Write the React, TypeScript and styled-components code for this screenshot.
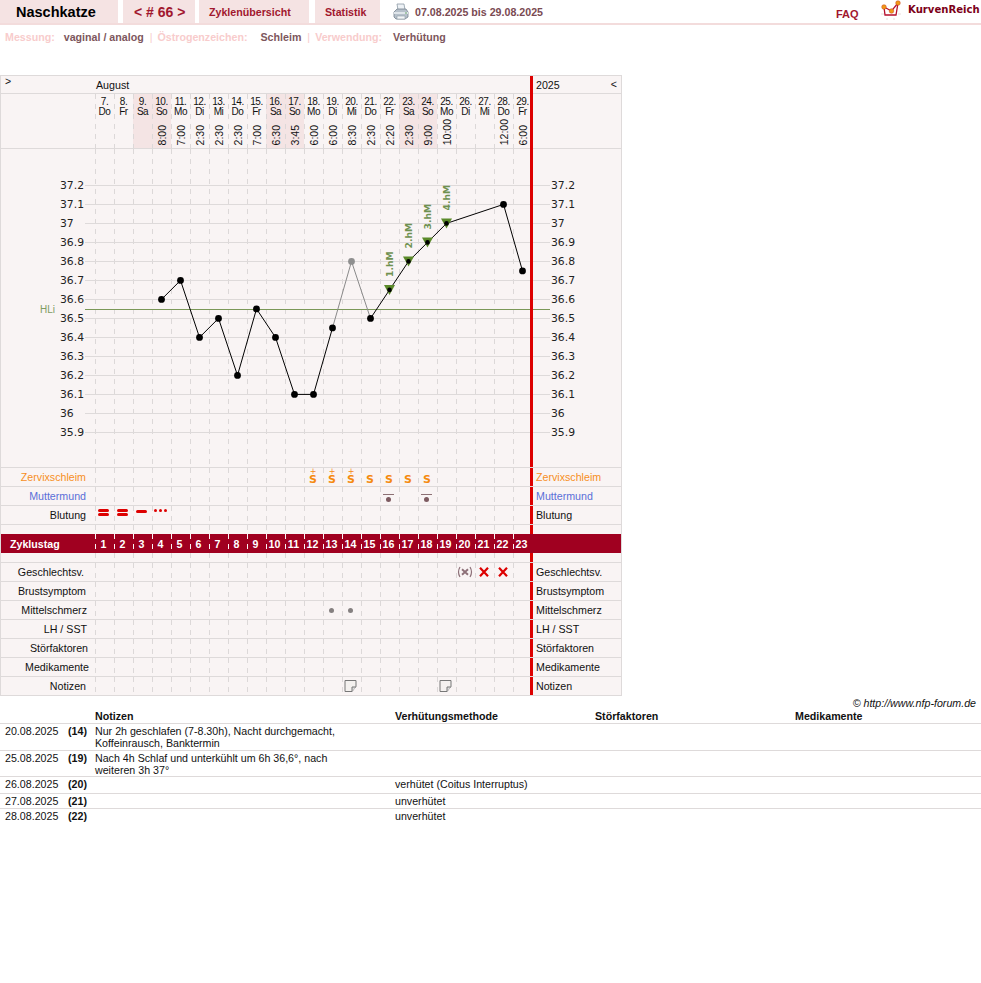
import React from 'react';
import styled, { createGlobalStyle } from 'styled-components';

const GlobalStyle = createGlobalStyle`
  body {
    margin: 0;
    background: #fff;
    font-family: "Liberation Sans", Arial, sans-serif;
    font-size: 10.67px;
    color: #111;
  }
`;

const LINE = '#dedada';
const PANEL = '#f9f4f4';
const PINK = '#f5e3e3';
const WINE = '#a1172e';
const RED = '#dd0000';
const DASH_W = 'rgba(255,255,255,0.95)';

const DAYS = [7, 8, 9, 10, 11, 12, 13, 14, 15, 16, 17, 18, 19, 20, 21, 22, 23, 24, 25, 26, 27, 28, 29];
const WEEK = ['Do', 'Fr', 'Sa', 'So', 'Mo', 'Di', 'Mi'];
const TIMES = ['', '', '', '8:00', '7:00', '2:30', '2:30', '2:30', '7:00', '6:30', '3:45', '6:00', '6:00', '8:30', '2:30', '2:20', '2:30', '9:00', '10:00', '', '', '12:00', '6:00'];

const TopBar = styled.div`
  display: flex;
  height: 23px;
  border-bottom: 2px solid #f3dcdc;
`;

const Tab = styled.div<{ $w: number; $gap: number }>`
  width: ${(p) => p.$w}px;
  margin-left: ${(p) => p.$gap}px;
  box-sizing: border-box;
  padding-left: 10px;
  background: ${PINK};
  display: flex;
  align-items: center;
  font-weight: bold;
  color: ${WINE};
`;

const BrandTab = styled(Tab)`
  font-size: 14.5px;
  color: #000;
  padding-left: 16px;
`;

const CycleTab = styled(Tab)`
  font-size: 14px;
  padding-left: 11px;
`;

const PrinterIcon = styled.svg`
  margin: 3px 0 0 13px;
  width: 16px;
  height: 18px;
`;

const RangeText = styled.div`
  margin-left: 6px;
  align-self: center;
  font-weight: bold;
  color: #7a4a52;
`;

const TopRight = styled.div`
  margin-left: auto;
  display: flex;
`;

const Faq = styled.div`
  margin-top: 8px;
  width: 45px;
  font-weight: bold;
  font-size: 11px;
  color: ${WINE};
`;

const LogoIcon = styled.svg`
  width: 20px;
  height: 20px;
  margin-right: 7px;
`;

const LogoText = styled.div`
  margin-top: 4px;
  width: 73px;
  font-family: "DejaVu Sans", sans-serif;
  font-weight: bold;
  font-size: 10.1px;
  color: #7c0018;
`;

const SubBar = styled.div`
  height: 24px;
  padding-left: 5px;
  display: flex;
  align-items: center;
  font-weight: bold;
  margin-bottom: 26px;
`;

const SubLabel = styled.span<{ $gap?: number }>`
  color: #f8cccc;
  margin-left: ${(p) => p.$gap || 0}px;
`;

const SubValue = styled.span<{ $gap: number }>`
  color: #7d565c;
  margin-left: ${(p) => p.$gap}px;
`;

const SubSep = styled.span`
  color: #f8cccc;
  font-weight: normal;
  margin-left: 6px;
`;

const Frame = styled.div`
  width: 622px;
  box-sizing: border-box;
  border: 1px solid ${LINE};
  border-bottom: 0;
  background: ${PANEL};
`;

const Row = styled.div<{ $h?: number; $plain?: boolean }>`
  display: flex;
  box-sizing: border-box;
  height: ${(p) => p.$h || 19}px;
  border-bottom: ${(p) => (p.$plain ? '0' : `1px solid ${LINE}`)};
`;

const Strip = styled(Row)`
  background: #a00020;
  color: #fff;
  font-weight: bold;
  align-items: stretch;
`;

const Label = styled.div<{ $pad?: number; $color?: string }>`
  width: 94px;
  flex: none;
  box-sizing: border-box;
  display: flex;
  align-items: center;
  justify-content: flex-end;
  padding-right: ${(p) => p.$pad ?? 9}px;
  color: ${(p) => p.$color || '#111'};
`;

const StripLabel = styled(Label)`
  justify-content: flex-start;
  padding-left: 9px;
  color: #fff;
`;

const MonthLabel = styled.div`
  width: 94px;
  flex: none;
  box-sizing: border-box;
  padding: 0 0 0 4px;
`;

const Days = styled.div`
  width: 435px;
  flex: none;
  display: flex;
  overflow: hidden;
  align-items: stretch;
`;

const MonthName = styled(Days)`
  align-items: center;
  padding-left: 1px;
  width: 434px;
`;

const DayCell = styled.div<{ $light?: boolean; $weekend?: boolean }>`
  width: 19px;
  flex: none;
  box-sizing: border-box;
  display: flex;
  align-items: center;
  justify-content: center;
  padding-right: 2px;
  background-color: ${(p) => (p.$weekend ? '#f4e4e4' : 'transparent')};
  background-image: repeating-linear-gradient(
    to bottom,
    ${(p) => (p.$light ? DASH_W : '#dcd8d8')} 0 5px,
    transparent 5px 10px
  );
  background-size: 1px 100%;
  background-repeat: no-repeat;
`;

const HeadCell = styled(DayCell)`
  flex-direction: column;
  justify-content: flex-start;
  padding: 3px 0 0 0;
  font-size: 10px;
  line-height: 10px;
  letter-spacing: -0.5px;
`;

const TimeText = styled.div`
  margin-top: auto;
  margin-bottom: 3px;
  writing-mode: vertical-rl;
  transform: rotate(180deg);
  font-size: 10.5px;
  letter-spacing: 0;
  line-height: 12px;
`;

const RedBar = styled.div<{ $solid?: boolean }>`
  width: 3px;
  flex: none;
  background: ${RED};
  margin-bottom: ${(p) => (p.$solid ? '-1px' : '0')};
`;

const EndLabel = styled.div<{ $color?: string }>`
  flex: 1;
  display: flex;
  align-items: center;
  justify-content: space-between;
  padding: 0 4px 0 3px;
  color: ${(p) => p.$color || '#111'};
`;

const Chevron = styled.span`
  font-size: 10.5px;
  line-height: 14px;
  display: block;
  margin-top: -2px;
`;

const PlotSvg = styled.svg`
  display: block;
  width: 620px;
  height: 318px;
`;

const Slime = styled.div`
  height: 18px;
  display: flex;
  flex-direction: column;
  align-items: center;
  justify-content: flex-end;
  padding: 0 0 2px 1px;
  box-sizing: border-box;
  font-family: "DejaVu Sans", sans-serif;
  color: #f58a10;
`;

const SlimeLetter = styled.div`
  font-weight: bold;
  font-size: 11px;
  line-height: 9px;
`;

const SlimePlus = styled.div`
  font-size: 8px;
  line-height: 7px;
`;

const CervixMark = styled.div`
  width: 11px;
  height: 7px;
  border-top: 1px solid #8d7074;
  display: flex;
  justify-content: center;
  margin-top: 3px;
  &::after {
    content: '';
    width: 5px;
    height: 5px;
    margin-top: 2px;
    border-radius: 50%;
    background: #7d5a60;
  }
`;

const BleedStack = styled.div<{ $n: number }>`
  display: flex;
  flex-direction: column;
  gap: 1px;
  margin-bottom: ${(p) => (p.$n === 1 ? 8 : 5)}px;
`;

const BleedBar = styled.div`
  width: 11px;
  height: 3px;
  border-radius: 2px;
  background: ${RED};
`;

const BleedDots = styled.div`
  display: flex;
  gap: 2px;
  margin-bottom: 9px;
`;

const BleedDot = styled.div`
  width: 3px;
  height: 3px;
  border-radius: 50%;
  background: ${RED};
`;

const PainDot = styled.div`
  width: 5px;
  height: 5px;
  border-radius: 50%;
  background: #858080;
`;

const NoteSvg = styled.svg`
  width: 13px;
  height: 12px;
`;

const CrossSvg = styled.svg`
  width: 12px;
  height: 10px;
`;

const HedgedSvg = styled.svg`
  width: 16px;
  height: 12px;
`;

const Credit = styled.div`
  width: 976px;
  height: 14px;
  line-height: 15px;
  text-align: right;
  font-style: italic;
`;

const NoteRow = styled.div<{ $h: number; $head?: boolean }>`
  display: grid;
  grid-template-columns: 68px 27px 300px 200px 200px 1fr;
  box-sizing: border-box;
  height: ${(p) => p.$h}px;
  padding-top: ${(p) => (p.$head ? 1 : 2)}px;
  border-bottom: 1px solid ${LINE};
  line-height: 11.5px;
  font-weight: ${(p) => (p.$head ? 'bold' : 'normal')};
`;

const DateCol = styled.div`
  padding-left: 5px;
`;

const DayNo = styled.div`
  font-weight: bold;
`;

const NoteText = styled.div`
  max-width: 250px;
`;

const LastRow = styled(NoteRow)`
  border-bottom: 0;
`;

const Printer = () => (
  <PrinterIcon viewBox="0 0 16 18">
    <path d="M4 1h7l1 6H5z" fill="#eef2f6" stroke="#8d9aa6" strokeWidth="0.8" />
    <path d="M1 9l3-3h9l2 3v5l-3 2H3l-2-2z" fill="#b6c0ca" stroke="#75828e" strokeWidth="0.8" />
    <path d="M1 9h14v2H1z" fill="#dfe5ea" />
    <path d="M4 13h8v3H4z" fill="#f3f5f7" stroke="#8d9aa6" strokeWidth="0.6" />
    <circle cx="13" cy="10" r="0.8" fill="#5aa05a" />
  </PrinterIcon>
);

const Logo = () => (
  <LogoIcon viewBox="0 0 20 20">
    <path d="M0 14h3M17 14h3M6 18v2M13 18v2" stroke="#e8dede" strokeWidth="1" />
    <path d="M3 7l1 8h11l2-12" fill="none" stroke="#b50f2d" strokeWidth="1.3" />
    <path d="M3 7l7.5 4L17 3" fill="none" stroke="#b50f2d" strokeWidth="1.2" />
    <circle cx="3" cy="7" r="2.3" fill="#f09a18" stroke="#c8401a" strokeWidth="0.5" />
    <circle cx="10.5" cy="11" r="2.3" fill="#f09a18" stroke="#c8401a" strokeWidth="0.5" />
    <circle cx="17" cy="3" r="2.3" fill="#f09a18" stroke="#c8401a" strokeWidth="0.5" />
  </LogoIcon>
);

const Cross = () => (
  <CrossSvg viewBox="0 0 12 10">
    <path d="M2 0.8l8 8.4M10 0.8l-8 8.4" stroke={RED} strokeWidth="2.2" />
  </CrossSvg>
);

const HedgedCross = () => (
  <HedgedSvg viewBox="0 0 16 12">
    <path d="M3 1Q0 6 3 11M13 1Q16 6 13 11" fill="none" stroke="#8d7078" strokeWidth="1.2" />
    <path d="M5 3.2l6 5.6M11 3.2l-6 5.6" stroke="#8d7078" strokeWidth="1.9" />
  </HedgedSvg>
);

const Note = () => (
  <NoteSvg viewBox="0 0 13 12">
    <path d="M1 0.5h11v6l-4 5H1z" fill="#f4f1ef" stroke="#777" strokeWidth="1" />
    <path d="M8 11.5V7h4" fill="#dedede" stroke="#777" strokeWidth="1" />
  </NoteSvg>
);

const slime = (plus: boolean) => (
  <Slime>
    {plus && <SlimePlus>+</SlimePlus>}
    <SlimeLetter>S</SlimeLetter>
  </Slime>
);

// chart values: [calendar day, temperature]
const TEMPS: [number, number][] = [
  [10, 36.6], [11, 36.7], [12, 36.4], [13, 36.5], [14, 36.2], [15, 36.55], [16, 36.4], [17, 36.1], [18, 36.1],
  [19, 36.45], [20, 36.8], [21, 36.5], [22, 36.65], [23, 36.8], [24, 36.9], [25, 37.0], [28, 37.1], [29, 36.75],
];
const GRID = [37.2, 37.1, 37, 36.9, 36.8, 36.7, 36.6, 36.5, 36.4, 36.3, 36.2, 36.1, 36, 35.9];
const PEAK: Record<number, string> = { 22: '1.hM', 23: '2.hM', 24: '3.hM', 25: '4.hM' };

// svg origin sits at page (1, 149)
const px = (day: number) => 94 + (day - 7) * 19 + 9.5;
const py = (t: number) => 36.4 + (37.2 - t) * 190;

const Plot = () => {
  const before = TEMPS.filter(([d]) => d <= 19);
  const after = TEMPS.filter(([d]) => d >= 21);
  const pts = (list: [number, number][]) => list.map(([d, t]) => `${px(d)},${py(t)}`).join(' ');
  return (
    <PlotSvg viewBox="0 0 620 318">
      {DAYS.map((d, i) => (
        <line key={d} x1={94.5 + i * 19} x2={94.5 + i * 19} y1={0} y2={318} stroke="#dcd8d8" strokeDasharray="5 5" />
      ))}
      {GRID.map((t) => (
        <g key={t}>
          <line x1={84} x2={549} y1={Math.floor(py(t)) + 0.5} y2={Math.floor(py(t)) + 0.5} stroke={LINE} />
          <text x={59} y={py(t) + 4} fontFamily="DejaVu Sans" fontSize="10.8" fill="#222">{t}</text>
          <text x={550} y={py(t) + 4} fontFamily="DejaVu Sans" fontSize="10.8" fill="#222">{t}</text>
        </g>
      ))}
      <line x1={84} x2={549} y1={160.5} y2={160.5} stroke="#7b9858" />
      <text x={39} y={164} fontFamily="Liberation Sans" fontSize="10" fill="#7f9c63">HLi</text>
      <polyline points={`${px(19)},${py(36.45)} ${px(20)},${py(36.8)} ${px(21)},${py(36.5)}`} fill="none" stroke="#8a8a8a" />
      <polyline points={pts(before)} fill="none" stroke="#000" />
      <polyline points={pts(after)} fill="none" stroke="#000" />
      {Object.keys(PEAK).map((k) => {
        const d = Number(k);
        const t = TEMPS.find(([day]) => day === d)![1];
        const x = px(d);
        const y = py(t);
        return (
          <g key={k}>
            <path d={`M${x - 5.5} ${y - 5}h11l-5.5 10z`} fill="#5b8a2a" />
            <text
              transform={`translate(${x + 3.5} ${y - 13}) rotate(-90)`}
              fontFamily="DejaVu Sans"
              fontWeight="bold"
              fontSize="9.2"
              fill="#6f9150"
            >
              {PEAK[d]}
            </text>
          </g>
        );
      })}
      {TEMPS.map(([d, t]) => (
        <circle
          key={d}
          cx={px(d)}
          cy={py(t)}
          r={PEAK[d] ? 2.3 : 3.4}
          fill={d === 20 ? '#8f8f8f' : '#000'}
        />
      ))}
      <rect x={529} y={0} width={3} height={318} fill={RED} />
    </PlotSvg>
  );
};

const bars = (n: number) => (
  <BleedStack $n={n}>
    {Array.from({ length: n }, (_, i) => (
      <BleedBar key={i} />
    ))}
  </BleedStack>
);

type RowDef = {
  label: string;
  pad?: number;
  color?: string;
  marks?: Record<number, React.ReactNode>;
};

const UPPER: RowDef[] = [
  {
    label: 'Zervixschleim',
    color: '#f78f1e',
    marks: { 12: slime(true), 13: slime(true), 14: slime(true), 15: slime(false), 16: slime(false), 17: slime(false), 18: slime(false) },
  },
  { label: 'Muttermund', color: '#5a6fd8', marks: { 16: <CervixMark />, 18: <CervixMark /> } },
  {
    label: 'Blutung',
    marks: {
      1: bars(2),
      2: bars(2),
      3: bars(1),
      4: (
        <BleedDots>
          <BleedDot />
          <BleedDot />
          <BleedDot />
        </BleedDots>
      ),
    },
  },
];

const LOWER: RowDef[] = [
  { label: 'Geschlechtsv.', pad: 11, marks: { 20: <HedgedCross />, 21: <Cross />, 22: <Cross /> } },
  { label: 'Brustsymptom', pad: 9 },
  { label: 'Mittelschmerz', pad: 8, marks: { 13: <PainDot />, 14: <PainDot /> } },
  { label: 'LH / SST', pad: 8 },
  { label: 'Störfaktoren', pad: 7 },
  { label: 'Medikamente', pad: 6 },
  { label: 'Notizen', pad: 9, marks: { 14: <Note />, 19: <Note /> } },
];

const DataRow = ({ row }: { row: RowDef }) => (
  <Row>
    <Label $pad={row.pad} $color={row.color}>{row.label}</Label>
    <Days>
      {DAYS.map((d, i) => (
        <DayCell key={d}>{row.marks?.[i + 1]}</DayCell>
      ))}
    </Days>
    <RedBar />
    <EndLabel $color={row.color}>{row.label}</EndLabel>
  </Row>
);

const BlankRow = ({ h, plain }: { h: number; plain?: boolean }) => (
  <Row $h={h} $plain={plain}>
    <Label />
    <Days>
      {DAYS.map((d) => (
        <DayCell key={d} />
      ))}
    </Days>
    <RedBar />
  </Row>
);

const App = () => (
  <>
    <GlobalStyle />
    <TopBar>
      <BrandTab $w={118} $gap={0}>Naschkatze</BrandTab>
      <CycleTab $w={72} $gap={5}>&lt; # 66 &gt;</CycleTab>
      <Tab $w={110} $gap={4}>Zyklenübersicht</Tab>
      <Tab $w={65} $gap={6}>Statistik</Tab>
      <Printer />
      <RangeText>07.08.2025 bis 29.08.2025</RangeText>
      <TopRight>
        <Faq>FAQ</Faq>
        <Logo />
        <LogoText>KurvenReich</LogoText>
      </TopRight>
    </TopBar>
    <SubBar>
      <SubLabel>Messung:</SubLabel>
      <SubValue $gap={9}>vaginal / analog</SubValue>
      <SubSep>|</SubSep>
      <SubLabel $gap={5}>Östrogenzeichen:</SubLabel>
      <SubValue $gap={13}>Schleim</SubValue>
      <SubSep>|</SubSep>
      <SubLabel $gap={5}>Verwendung:</SubLabel>
      <SubValue $gap={11}>Verhütung</SubValue>
    </SubBar>

    <Frame>
      <Row $h={18}>
        <MonthLabel>
          <Chevron>&gt;</Chevron>
        </MonthLabel>
        <MonthName>August</MonthName>
        <RedBar $solid />
        <EndLabel>
          2025
          <Chevron>&lt;</Chevron>
        </EndLabel>
      </Row>
      <Row $h={55}>
        <Label />
        <Days>
          {DAYS.map((d, i) => {
            const wd = WEEK[i % 7];
            return (
              <HeadCell key={d} $weekend={wd === 'Sa' || wd === 'So'}>
                <div>{d}.</div>
                <div>{wd}</div>
                {TIMES[i] && <TimeText>{TIMES[i]}</TimeText>}
              </HeadCell>
            );
          })}
        </Days>
        <RedBar $solid />
      </Row>
      <Row $h={319}>
        <Plot />
      </Row>
      {UPPER.map((r) => (
        <DataRow key={r.label} row={r} />
      ))}
      <BlankRow h={9} plain />
      <Strip $plain>
        <StripLabel>Zyklustag</StripLabel>
        <Days>
          {DAYS.map((d, i) => (
            <DayCell key={d} $light>{i + 1}</DayCell>
          ))}
        </Days>
      </Strip>
      <BlankRow h={10} />
      {LOWER.map((r) => (
        <DataRow key={r.label} row={r} />
      ))}
    </Frame>

    <Credit>© http://www.nfp-forum.de</Credit>
    <NoteRow $h={14} $head>
      <DateCol />
      <div />
      <div>Notizen</div>
      <div>Verhütungsmethode</div>
      <div>Störfaktoren</div>
      <div>Medikamente</div>
    </NoteRow>
    <NoteRow $h={27}>
      <DateCol>20.08.2025</DateCol>
      <DayNo>(14)</DayNo>
      <NoteText>Nur 2h geschlafen (7-8.30h), Nacht durchgemacht, Koffeinrausch, Banktermin</NoteText>
    </NoteRow>
    <NoteRow $h={26}>
      <DateCol>25.08.2025</DateCol>
      <DayNo>(19)</DayNo>
      <NoteText>Nach 4h Schlaf und unterkühlt um 6h 36,6°, nach weiteren 3h 37°</NoteText>
    </NoteRow>
    <NoteRow $h={17}>
      <DateCol>26.08.2025</DateCol>
      <DayNo>(20)</DayNo>
      <div />
      <div>verhütet (Coitus Interruptus)</div>
    </NoteRow>
    <NoteRow $h={15}>
      <DateCol>27.08.2025</DateCol>
      <DayNo>(21)</DayNo>
      <div />
      <div>unverhütet</div>
    </NoteRow>
    <LastRow $h={15}>
      <DateCol>28.08.2025</DateCol>
      <DayNo>(22)</DayNo>
      <div />
      <div>unverhütet</div>
    </LastRow>
  </>
);

export default App;
